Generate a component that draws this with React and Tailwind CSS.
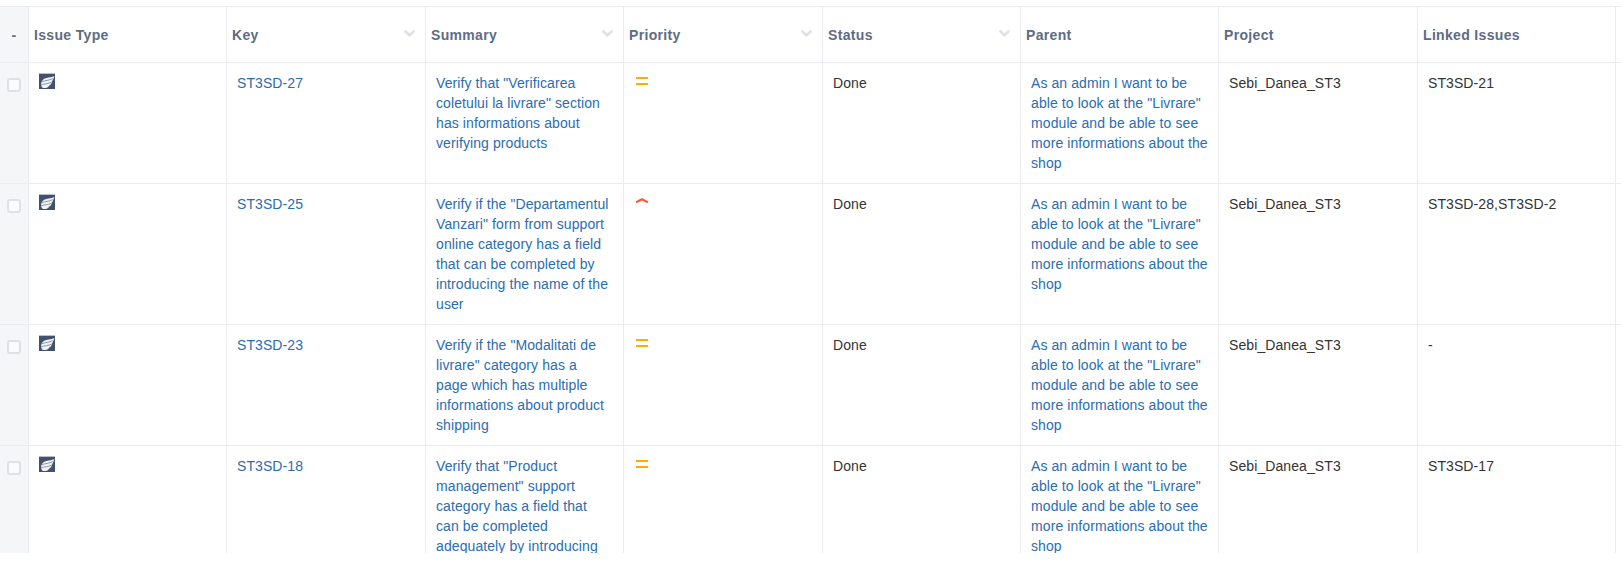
const GRID =
  'grid grid-cols-[29px_198px_199px_198px_199px_198px_198px_199px_198px_5px] border-b border-[#ebecf0]';

const COLUMNS = [
  { label: 'Issue Type' },
  { label: 'Key', sortable: true },
  { label: 'Summary', sortable: true },
  { label: 'Priority', sortable: true },
  { label: 'Status', sortable: true },
  { label: 'Parent' },
  { label: 'Project' },
  { label: 'Linked Issues' },
];

const PARENT = [
  'As an admin I want to be',
  'able to look at the "Livrare"',
  'module and be able to see',
  'more informations about the',
  'shop',
];

const ROWS = [
  {
    key: 'ST3SD-27',
    priority: 'medium',
    linked: 'ST3SD-21',
    height: 'h-[121px]',
    summary: ['Verify that "Verificarea', 'coletului la livrare" section', 'has informations about', 'verifying products'],
  },
  {
    key: 'ST3SD-25',
    priority: 'high',
    linked: 'ST3SD-28,ST3SD-2',
    height: 'h-[141px]',
    summary: [
      'Verify if the "Departamentul',
      'Vanzari" form from support',
      'online category has a field',
      'that can be completed by',
      'introducing the name of the',
      'user',
    ],
  },
  {
    key: 'ST3SD-23',
    priority: 'medium',
    linked: '-',
    height: 'h-[121px]',
    summary: [
      'Verify if the "Modalitati de',
      'livrare" category has a',
      'page which has multiple',
      'informations about product',
      'shipping',
    ],
  },
  {
    key: 'ST3SD-18',
    priority: 'medium',
    linked: 'ST3SD-17',
    height: 'h-[141px]',
    summary: [
      'Verify that "Product',
      'management" support',
      'category has a field that',
      'can be completed',
      'adequately by introducing',
    ],
  },
];

function SortChevron() {
  return (
    <svg className="mr-2.5 -mt-[3px] h-[7px] w-[11px]" viewBox="0 0 11 7" fill="none">
      <path d="M1.5 1.500 5.500 5.200 9.500 1.500" stroke="#dfe1e6" strokeWidth="2.700" strokeLinecap="round" />
    </svg>
  );
}

function IssueIcon() {
  return (
    <svg className="h-4 w-4" viewBox="0 0 16 16">
      <rect width="16" height="16" fill="#42526e" />
      <rect width="16" height="1" fill="#b9c0cb" />
      <path
        d="M15.300 3C12.500 4.700 7 4.300 4.500 6.200 2.500 7.800 1.900 10 2.200 12 2.300 13.500 3.200 14.800 4.500 15H7C9 14.600 9.500 13.600 10.300 12.500 12 11.600 12.700 10 13.300 8 14.300 6.500 15 4.800 15.300 3Z"
        fill="#f1f2f4"
      />
      <path
        d="M3 8.700C6 7.300 10 7.600 13.800 5.600M2.200 11.700C5.500 10.700 9 11 12.800 9"
        stroke="#8d97a8"
        strokeWidth="1"
        fill="none"
      />
    </svg>
  );
}

function PriorityIcon({ level }) {
  return (
    <svg className="h-4 w-4" viewBox="0 0 16 16" fill="none">
      {level === 'medium' ? (
        <path d="M2 4h12v2H2zM2 10h12v2H2z" fill="#ffab00" />
      ) : (
        <path
          d="M3 7.900Q5.500 6.500 8 5.300 10.500 6.500 13 7.900"
          stroke="#ff5630"
          strokeWidth="2.100"
          strokeLinecap="round"
          strokeLinejoin="round"
        />
      )}
    </svg>
  );
}

function Lines({ lines }) {
  return lines.map((line, i) => (
    <span key={i} className="block whitespace-pre">
      {line}
    </span>
  ));
}

function Cell({ children, className = '' }) {
  return <div className={`border-r border-[#ebecf0] pt-2.5 pl-2.5 ${className}`}>{children}</div>;
}

export default function App() {
  return (
    <div className="h-[565px] w-full overflow-hidden bg-white pt-1.5 font-['Liberation_Sans',Arial,sans-serif] text-sm leading-5 tracking-[0.09px] text-[#333333]">
      <div className="h-[547px] w-[1621px] overflow-hidden border-t border-[#ebecf0]">
        <div className={`${GRID} h-14 font-bold text-[#5e6c84]`}>
          <div className="flex items-center justify-center border-r border-[#ebecf0] bg-[#f5f6f8]">-</div>
          {COLUMNS.map((c) => (
            <div key={c.label} className="flex items-center justify-between border-r border-[#ebecf0] pl-[5px]">
              <span className="tracking-[0.33px]">{c.label}</span>
              {c.sortable && <SortChevron />}
            </div>
          ))}
        </div>
        {ROWS.map((row) => (
          <div key={row.key} className={`${GRID} ${row.height}`}>
            <div className="border-r border-[#ebecf0] bg-[#f5f6f8] pt-[15px] pl-[7px]">
              <div className="h-3.5 w-3.5 rounded-[3px] border-2 border-[#dfe1e6] bg-[#fafbfc]" />
            </div>
            <Cell>
              <IssueIcon />
            </Cell>
            <Cell className="text-[#2a6db0]">{row.key}</Cell>
            <Cell className="text-[#2a6db0]">
              <Lines lines={row.summary} />
            </Cell>
            <Cell>
              <PriorityIcon level={row.priority} />
            </Cell>
            <Cell>Done</Cell>
            <Cell className="text-[#2a6db0]">
              <Lines lines={PARENT} />
            </Cell>
            <Cell>Sebi_Danea_ST3</Cell>
            <Cell>{row.linked}</Cell>
          </div>
        ))}
      </div>
    </div>
  );
}
